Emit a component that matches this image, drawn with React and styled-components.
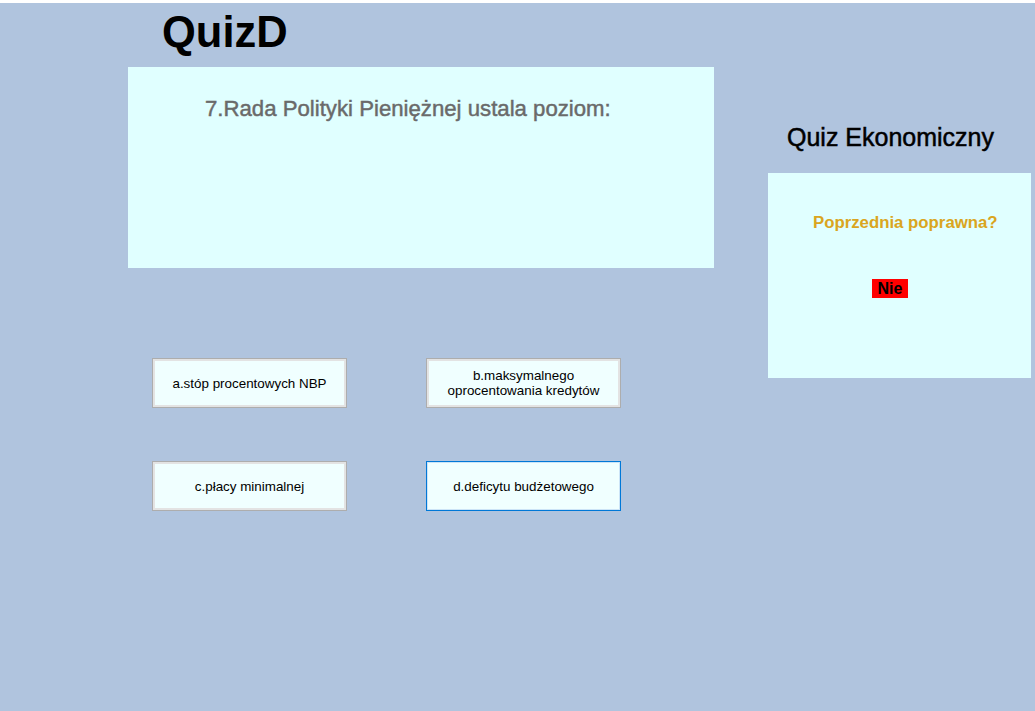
import React from "react";
import styled, { createGlobalStyle } from "styled-components";

const GlobalStyle = createGlobalStyle`
  html, body {
    margin: 0;
    padding: 0;
    background: #b0c4de;
  }
  * {
    box-sizing: border-box;
  }
`;

const answers = [
  { id: "a", text: "a.stóp procentowych NBP" },
  { id: "b", text: "b.maksymalnego\noprocentowania kredytów" },
  { id: "c", text: "c.płacy minimalnej" },
  { id: "d", text: "d.deficytu budżetowego", focused: true },
];

const App = () => {
  return (
    <>
      <GlobalStyle />
      <Page>
        <MainColumn>
          <Title>QuizD</Title>
          <QuestionPanel>
            <QuestionText>7.Rada Polityki Pieniężnej ustala poziom:</QuestionText>
          </QuestionPanel>
          <AnswerGrid>
            {answers.map((a) => (
              <AnswerButton key={a.id} $focused={a.focused}>
                {a.text}
              </AnswerButton>
            ))}
          </AnswerGrid>
        </MainColumn>
        <SideColumn>
          <SideTitle>Quiz Ekonomiczny</SideTitle>
          <StatusPanel>
            <StatusLabel>Poprzednia poprawna?</StatusLabel>
            <ResultBadge>Nie</ResultBadge>
          </StatusPanel>
        </SideColumn>
      </Page>
    </>
  );
};

const Page = styled.div`
  display: flex;
  width: 100%;
  height: 711px;
  background-color: #b0c4de;
  border-top: 3px solid #ffffff;
  font-family: "Liberation Sans", Arial, sans-serif;
`;

const MainColumn = styled.div`
  display: flex;
  flex-direction: column;
  margin-left: 128px;
  width: 586px;
`;

const Title = styled.h1`
  margin: 0 0 6px 0;
  padding-left: 34px;
  font-size: 43.5px;
  line-height: 58px;
  font-weight: bold;
  color: #000000;
`;

const QuestionPanel = styled.div`
  height: 201px;
  background-color: #e0ffff;
  padding: 29px 0 0 77px;
`;

const QuestionText = styled.div`
  font-size: 22.2px;
  line-height: 26px;
  font-weight: normal;
  color: #6a6a6a;
  -webkit-text-stroke: 0.45px #6a6a6a;
`;

const AnswerGrid = styled.div`
  display: grid;
  grid-template-columns: 195px 195px;
  grid-auto-rows: 50px;
  column-gap: 79px;
  row-gap: 53px;
  margin-top: 90px;
  padding-left: 24px;
`;

const AnswerButton = styled.button`
  display: flex;
  align-items: center;
  justify-content: center;
  white-space: pre-line;
  text-align: center;
  background-color: #f0ffff;
  border: 1px solid ${(p) => (p.$focused ? "#0078d7" : "#adadad")};
  box-shadow: inset 0 0 0 ${(p) => (p.$focused ? "1px #cce4f7" : "2px #e3e3e3")};
  font-family: "Liberation Sans", Arial, sans-serif;
  font-size: 13.4px;
  line-height: 15px;
  color: #000000;
  padding: 0 4px;
`;

const SideColumn = styled.div`
  display: flex;
  flex-direction: column;
  margin-left: 54px;
  width: 263px;
`;

const SideTitle = styled.h2`
  margin: 120px 0 22px 0;
  padding-left: 19px;
  font-size: 25px;
  line-height: 28px;
  font-weight: normal;
  color: #000000;
  -webkit-text-stroke: 0.5px #000000;
`;

const StatusPanel = styled.div`
  display: flex;
  flex-direction: column;
  align-items: flex-start;
  height: 205px;
  background-color: #e0ffff;
  padding: 40px 0 0 45px;
`;

const StatusLabel = styled.div`
  font-size: 16.8px;
  line-height: 19px;
  font-weight: bold;
  color: #daa520;
`;

const ResultBadge = styled.div`
  margin: 47px 0 0 59px;
  width: 36px;
  height: 19px;
  background-color: #ff0000;
  text-align: center;
  font-size: 16px;
  line-height: 19px;
  font-weight: bold;
  color: #000000;
`;

export default App;
